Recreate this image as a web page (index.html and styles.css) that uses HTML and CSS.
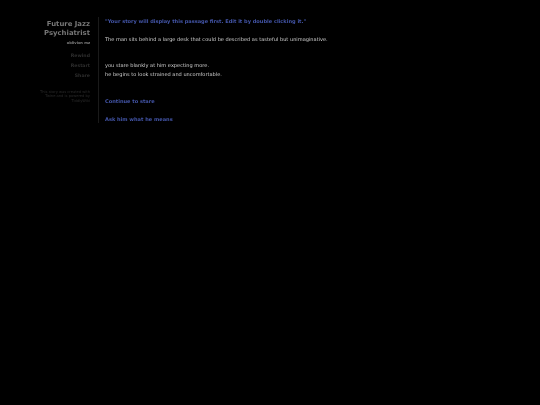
FILE: index.html
```
<!DOCTYPE html>
<html lang="en">
<head>
<meta charset="utf-8">
<title>Future Jazz Psychiatrist</title>
<link rel="stylesheet" href="styles.css">
</head>
<body>
<div class="page">
  <aside class="sidebar">
    <h1 class="title">Future Jazz Psychiatrist</h1>
    <div class="author">oblivion mz</div>
    <ul class="menu">
      <li>Rewind</li>
      <li>Restart</li>
      <li>Share</li>
    </ul>
    <p class="credits">This story was created with Twine and is powered by TiddlyWiki</p>
  </aside>
  <main class="passage">
    <p class="line first"><a class="link" href="#">"Your story will display this passage first. Edit it by double clicking it."</a></p>
    <p class="line intro">The man sits behind a large desk that could be described as tasteful but unimaginative.</p>
    <p class="line stare">you stare blankly at him expecting more.</p>
    <p class="line">he begins to look strained and uncomfortable.</p>
    <p class="line choice-a"><a class="link" href="#">Continue to stare</a></p>
    <p class="line choice-b"><a class="link" href="#">Ask him what he means</a></p>
  </main>
</div>
</body>
</html>
```
FILE: styles.css
```
* { box-sizing: border-box; }
html, body { margin: 0; height: 100%; background: #000; }
body {
  font-family: "DejaVu Sans", Verdana, sans-serif;
  font-size: 5.05px;
  line-height: 9px;
  color: #cfcfcf;
}
.page { display: flex; align-items: flex-start; padding-top: 17px; filter: blur(0.25px); }
.sidebar { width: 90px; margin-right: 8px; text-align: right; flex: none; padding-top: 3px; }
.title { margin: 0; font-size: 6.9px; line-height: 8.5px; font-weight: bold; color: #777; }
.author { margin-top: 3px; font-size: 3.6px; line-height: 6px; font-weight: bold; color: #808080; }
.menu { list-style: none; margin: 5px 0 0; padding: 0; font-size: 4.65px; line-height: 10px; font-weight: bold; color: #2e2e2e; }
.credits { margin: 8.5px 0 0 auto; width: 54px; font-size: 3.65px; line-height: 4.8px; color: #2a2a2a; }
.passage { width: 330px; height: 106px; border-left: 1px solid #1a1a1a; padding-left: 6px; }
.line { margin: 0; white-space: nowrap; }
.link { color: #4355a8; font-weight: bold; text-decoration: none; }
.intro { margin-top: 9px; }
.stare { margin-top: 17px; }
.choice-a { margin-top: 18px; }
.choice-b { margin-top: 9px; }
```
